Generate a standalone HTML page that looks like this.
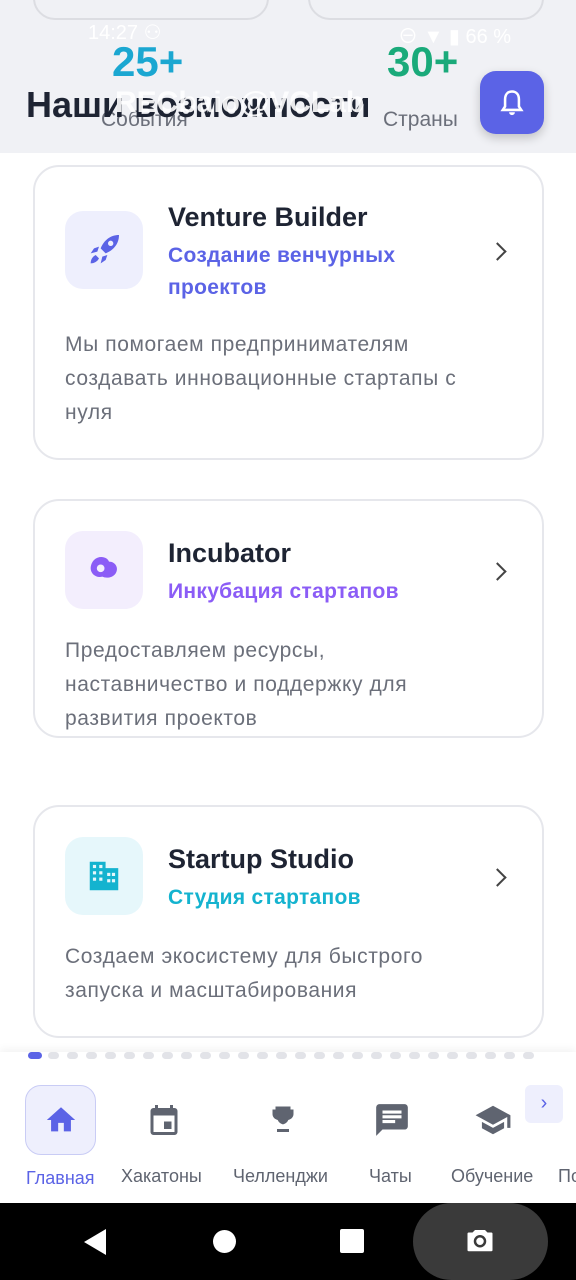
<!DOCTYPE html>
<html><head><meta charset="utf-8"><style>
*{margin:0;padding:0;box-sizing:border-box}
body{width:576px;height:1280px;overflow:hidden;background:#fff;font-family:"Liberation Sans","Noto Sans CJK SC",sans-serif;position:relative}
.abs{position:absolute}
.top{left:0;top:0;width:576px;height:153px;background:#f0f1f5}
.card{position:absolute;left:33px;width:511px;border:2px solid #e6e7ec;border-radius:26px;background:#fff}
.ic{position:absolute;left:30px;top:44px;width:78px;height:78px;border-radius:18px;display:flex;align-items:center;justify-content:center}
.t{position:absolute;left:133px;font-size:27px;font-weight:bold;color:#1e2433}
.s{position:absolute;left:133px;font-size:21px;font-weight:bold;line-height:32px;letter-spacing:.3px}
.d{position:absolute;left:30px;font-size:21px;color:#6b6f7a;line-height:34px;letter-spacing:.6px;white-space:nowrap}
.ch{position:absolute;right:38px;width:13px;height:13px;border-right:2.5px solid #444;border-top:2.5px solid #444;transform:rotate(45deg)}
.nav{left:0;top:1052px;width:576px;height:151px;background:#fff;box-shadow:0 -3px 8px rgba(0,0,0,.05)}
.lab{position:absolute;top:1166px;font-size:18px;color:#5f6470}
</style></head><body>
<div class="abs top"></div>
<div class="abs" style="left:33px;top:-30px;width:236px;height:50px;border:2px solid #dcdde2;border-radius:22px"></div>
<div class="abs" style="left:308px;top:-30px;width:236px;height:50px;border:2px solid #dcdde2;border-radius:22px"></div>
<div class="abs" style="left:88px;top:20px;font-size:20px;color:#fff">14:27 ⚇</div>
<div class="abs" style="left:398px;top:20px;font-size:20px;color:#fff">⊖ ▼ ▮ 66 %</div>
<div class="abs" style="left:112px;top:38px;font-size:42px;font-weight:bold;color:#1ba7d1">25+</div>
<div class="abs" style="left:387px;top:38px;font-size:42px;font-weight:bold;color:#1aaa7a">30+</div>
<div class="abs" style="left:101px;top:108px;font-size:21px;color:#6b6f7a">События</div>
<div class="abs" style="left:383px;top:108px;font-size:21px;color:#6b6f7a">Страны</div>
<div class="abs" style="left:26px;top:84px;font-size:36px;font-weight:bold;color:#1e2433">Наши возможности</div>
<div class="abs" style="left:115px;top:86px;font-size:30px;font-weight:bold;color:#fff;opacity:.9">RECbaio@VCLab</div>
<div class="abs" style="left:480px;top:71px;width:64px;height:63px;border-radius:16px;background:#5b63e6;box-shadow:0 4px 10px rgba(0,0,0,.2);display:flex;align-items:center;justify-content:center">
<svg width="28" height="30" viewBox="0 0 24 26"><path d="M12 3c-4 0-6 3-6 7v6l-2 3h16l-2-3v-6c0-4-2-7-6-7z" fill="none" stroke="#fff" stroke-width="2.2"/><path d="M9.5 21a2.5 2.5 0 005 0z" fill="#fff"/></svg></div>

<div class="card" style="top:165px;height:295px">
<div class="ic" style="background:#eeeffd"><svg width="40" height="40" viewBox="0 0 24 24"><path d="M21 3c-5 0-9 3-11 8l3 3c5-2 8-6 8-11z" fill="#5b63e6"/><circle cx="16" cy="8" r="1.6" fill="#eeeffd"/><path d="M9 10l-3 1-2 3 4-1zM14 15l-1 3-3 2 1-4zM7 15c-2 1-3 3-3 5 2 0 4-1 5-3z" fill="#5b63e6"/></svg></div>
<div class="t" style="top:35px">Venture Builder</div>
<div class="s" style="top:73px;color:#5b63e6">Создание венчурных<br>проектов</div>
<div class="ch" style="top:78px"></div>
<div class="d" style="top:161px">Мы помогаем предпринимателям<br>создавать инновационные стартапы с<br>нуля</div>
</div>

<div class="card" style="top:499px;height:239px">
<div class="ic" style="top:30px;background:#f3eefd"><svg width="40" height="40" viewBox="0 0 24 24"><path d="M6 6c3-3 8-2 9 1 4 0 6 4 4 7-2 3-6 3-8 2-4 1-7-2-7-5 0-2 1-4 2-5z" fill="#8b5cf6"/><circle cx="10" cy="11" r="2.3" fill="#f3eefd"/></svg></div>
<div class="t" style="top:37px">Incubator</div>
<div class="s" style="top:75px;color:#8b5cf6">Инкубация стартапов</div>
<div class="ch" style="top:64px"></div>
<div class="d" style="top:133px">Предоставляем ресурсы,<br>наставничество и поддержку для<br>развития проектов</div>
</div>

<div class="card" style="top:805px;height:233px">
<div class="ic" style="top:30px;background:#e6f7fb"><svg width="38" height="38" viewBox="0 0 24 24"><path d="M3 3h10v4h8v14H3z" fill="#14b3cf"/><g fill="#e6f7fb"><rect x="5" y="5" width="2" height="2"/><rect x="9" y="5" width="2" height="2"/><rect x="5" y="9" width="2" height="2"/><rect x="9" y="9" width="2" height="2"/><rect x="5" y="13" width="2" height="2"/><rect x="9" y="13" width="2" height="2"/><rect x="14" y="10" width="2" height="2"/><rect x="17" y="10" width="2" height="2"/><rect x="14" y="14" width="2" height="2"/><rect x="17" y="14" width="2" height="2"/></g></svg></div>
<div class="t" style="top:37px">Startup Studio</div>
<div class="s" style="top:75px;color:#14b3cf">Студия стартапов</div>
<div class="ch" style="top:64px"></div>
<div class="d" style="top:133px">Создаем экосистему для быстрого<br>запуска и масштабирования</div>
</div>

<div class="abs nav"></div>
<div class="abs" style="left:28px;top:1052px;width:14px;height:7px;border-radius:4px;background:#5b63e6"></div>
<div class="abs" style="left:48px;top:1052px;display:flex;gap:8px">
<script>document.write('<i style="display:block;width:11px;height:7px;border-radius:4px;background:#e2e3e8"></i>'.repeat(26))</script>
</div>
<div class="abs" style="left:25px;top:1085px;width:71px;height:70px;border-radius:16px;background:#eeeffd;border:1.5px solid #c9ccf5"></div>
<svg class="abs" style="left:44px;top:1103px" width="34" height="34" viewBox="0 0 24 24"><path d="M10 20v-6h4v6h5v-8h3L12 3 2 12h3v8z" fill="#5b63e6"/></svg>
<svg class="abs" style="left:146px;top:1102px" width="36" height="36" viewBox="0 0 24 24"><path d="M19 4h-1V2h-2v2H8V2H6v2H5a2 2 0 00-2 2v14a2 2 0 002 2h14a2 2 0 002-2V6a2 2 0 00-2-2zm0 16H5V9h14zM12 13h5v5h-5z" fill="#5f6470"/></svg>
<svg class="abs" style="left:265px;top:1102px" width="36" height="36" viewBox="0 0 24 24"><path d="M19 5h-2V3H7v2H5v3c0 2 1.5 3.5 3.5 4 .6 1.5 2 2.6 3.5 2.9V18H8v2h8v-2h-4v-3.1c1.5-.3 2.9-1.4 3.5-2.9 2-.5 3.5-2 3.5-4V5z" fill="#5f6470"/></svg>
<svg class="abs" style="left:373px;top:1101px" width="38" height="38" viewBox="0 0 24 24"><path d="M20 2H4a2 2 0 00-2 2v18l4-4h14a2 2 0 002-2V4a2 2 0 00-2-2zM6 9h12v2H6zm8 5H6v-2h8zm4-6H6V6h12z" fill="#5f6470"/></svg>
<svg class="abs" style="left:474px;top:1101px" width="38" height="38" viewBox="0 0 24 24"><path d="M5 13.2v4L12 21l7-3.8v-4L12 17zM12 3L1 9l11 6 9-4.9V17h2V9z" fill="#5f6470"/></svg>
<div class="abs" style="left:525px;top:1085px;width:38px;height:38px;border-radius:6px;background:#eeeffd;color:#5b63e6;font-size:20px;text-align:center;line-height:36px">›</div>
<div class="lab" style="left:26px;color:#5b63e6;top:1168px">Главная</div>
<div class="lab" style="left:121px">Хакатоны</div>
<div class="lab" style="left:233px">Челленджи</div>
<div class="lab" style="left:369px">Чаты</div>
<div class="lab" style="left:451px">Обучение</div>
<div class="lab" style="left:558px">По</div>

<div class="abs" style="left:0;top:1203px;width:576px;height:77px;background:#000"></div>
<div class="abs" style="left:84px;top:1229px;width:0;height:0;border-top:13px solid transparent;border-bottom:13px solid transparent;border-right:22px solid #fff"></div>
<div class="abs" style="left:213px;top:1230px;width:23px;height:23px;border-radius:50%;background:#fff"></div>
<div class="abs" style="left:340px;top:1229px;width:24px;height:24px;border-radius:2px;background:#fff"></div>
<div class="abs" style="left:413px;top:1203px;width:135px;height:77px;border-radius:40px;background:#3a3a3a"></div>
<svg class="abs" style="left:465px;top:1226px" width="30" height="28" viewBox="0 0 24 22"><path d="M8 3l-2 2H3a1 1 0 00-1 1v13a1 1 0 001 1h18a1 1 0 001-1V6a1 1 0 00-1-1h-3l-2-2z" fill="#fff"/><circle cx="12" cy="12" r="4" fill="none" stroke="#3a3a3a" stroke-width="2"/></svg>
</body></html>
